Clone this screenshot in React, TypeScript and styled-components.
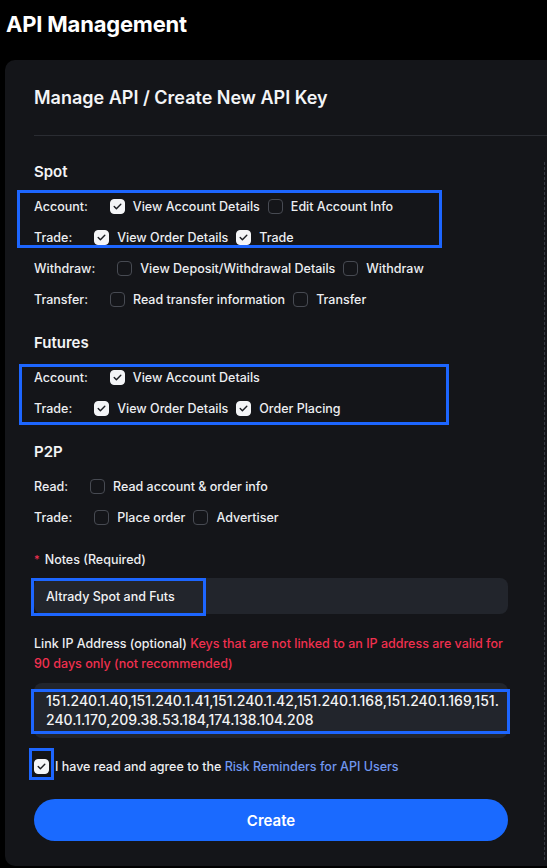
import React from "react";
import styled, { createGlobalStyle } from "styled-components";

const GlobalStyle = createGlobalStyle`
  html, body { margin: 0; padding: 0; background: #000; }
  body {
    font-family: Inter, "Noto Sans", "Liberation Sans", Arial, sans-serif;
    color: #eaecef;
  }
  * { box-sizing: border-box; }
`;

const Page = styled.div`
  width: 547px;
  height: 868px;
  overflow: hidden;
  background: #000;
  padding-top: 10px;
`;

const PageTitle = styled.h1`
  margin: 0 0 22px 6px;
  font-size: 22px;
  line-height: 28px;
  font-weight: 700;
  color: #ffffff;
  letter-spacing: -0.2px;
`;

const Card = styled.section`
  margin-left: 5px;
  width: 660px;
  height: 806px;
  background: #141519;
  border-radius: 10px;
  padding-top: 26px;
  display: flex;
  flex-direction: column;
`;

const CardTitle = styled.h2`
  margin: 0 0 0 29px;
  font-size: 18px;
  line-height: 24px;
  font-weight: 600;
  color: #f3f4f6;
`;

const Divider = styled.hr`
  margin: 25px 0 0 29px;
  border: 0;
  height: 1px;
  background: #2a2c32;
`;

const CardBody = styled.div`
  flex: 1;
  display: flex;
  padding-top: 26px;
`;

const FormColumn = styled.div`
  width: 474px;
  margin-left: 29px;
  display: flex;
  flex-direction: column;
`;

const SideColumn = styled.aside`
  flex: 1;
  margin-left: 36px;
  margin-bottom: 4px;
  background-image: repeating-linear-gradient(
    to bottom,
    #363941 0 3px,
    transparent 3px 5px
  );
  background-size: 1px 100%;
  background-repeat: no-repeat;
`;

const SectionTitle = styled.h3`
  margin: 18px 0 0;
  font-size: 15px;
  line-height: 20px;
  font-weight: 600;
  color: #f3f4f6;
  &:first-child {
    margin-top: 0;
  }
`;

const RowGroup = styled.div`
  position: relative;
  margin-top: 9px;
`;

const Highlight = styled.div<{ $l: number; $t: number; $w: number; $h: number }>`
  position: absolute;
  left: ${(p) => p.$l}px;
  top: ${(p) => p.$t}px;
  width: ${(p) => p.$w}px;
  height: ${(p) => p.$h}px;
  border: 3px solid #1d66ff;
  pointer-events: none;
`;

const PermRow = styled.div`
  display: flex;
  align-items: center;
  height: 31px;
  font-size: 12.5px;
  line-height: 20px;
  font-weight: 500;
  color: #eceef1;
  white-space: nowrap;
`;

const RowLabel = styled.span`
  margin-right: 22px;
`;

const Option = styled.label`
  display: inline-flex;
  align-items: center;
  gap: 8px;
  margin-right: 8px;
`;

const Box = styled.span<{ $checked?: boolean }>`
  position: relative;
  flex: none;
  width: 15px;
  height: 15px;
  border-radius: 4px;
  display: inline-flex;
  align-items: center;
  justify-content: center;
  background: ${(p) => (p.$checked ? "#f4f5f7" : "transparent")};
  border: 1px solid ${(p) => (p.$checked ? "#f4f5f7" : "#474a52")};
`;

const Check = ({ on }: { on?: boolean }) => (
  <Box $checked={on}>
    {on && (
      <svg width="11" height="11" viewBox="0 0 11 11" fill="none">
        <path
          d="M2.2 5.6 L4.4 7.8 L8.8 3.2"
          stroke="#1b1d22"
          strokeWidth="1.4"
          strokeLinecap="round"
          strokeLinejoin="round"
        />
      </svg>
    )}
  </Box>
);

const FieldLabel = styled.div<{ $gap: number }>`
  margin-top: ${(p) => p.$gap}px;
  font-size: 12.5px;
  line-height: 20px;
  font-weight: 500;
  color: #eceef1;
`;

const Star = styled.span`
  color: #f23051;
  font-size: 11px;
  margin-right: 5px;
  vertical-align: 1px;
`;

const Warn = styled.span`
  color: #f0304f;
`;

const NotesInput = styled.div`
  position: relative;
  margin-top: 8px;
  height: 36px;
  background: #22252c;
  border-radius: 8px;
  padding: 0 12px;
  display: flex;
  align-items: center;
  font-size: 12.5px;
  font-weight: 500;
  color: #f2f3f5;
`;

const IpArea = styled.div`
  position: relative;
  margin-top: 9px;
  background: #22252c;
  border-radius: 8px;
  padding: 8px 8px 9px 12px;
  font-size: 14px;
  line-height: 19px;
  font-weight: 500;
  color: #f2f3f5;
  word-break: break-all;
`;

const AgreeRow = styled.div`
  position: relative;
  margin-top: 18px;
  display: flex;
  align-items: center;
  gap: 6px;
  height: 20px;
  font-size: 12.5px;
  font-weight: 500;
  color: #eceef1;
  white-space: nowrap;
`;

const AgreeBox = styled.span`
  position: relative;
  display: inline-flex;
`;

const RiskLink = styled.a`
  color: #7097ef;
  text-decoration: none;
`;

const CreateButton = styled.button`
  margin-top: 23px;
  height: 42px;
  width: 100%;
  border: 0;
  border-radius: 21px;
  background: #1a6aff;
  color: #ffffff;
  font-family: inherit;
  font-size: 15px;
  font-weight: 600;
`;

type Opt = { text: string; on?: boolean };
const Row = ({ label, opts }: { label: string; opts: Opt[] }) => (
  <PermRow>
    <RowLabel>{label}</RowLabel>
    {opts.map((o) => (
      <Option key={o.text}>
        <Check on={o.on} />
        {o.text}
      </Option>
    ))}
  </PermRow>
);

export default function App() {
  return (
    <Page>
      <GlobalStyle />
      <PageTitle>API Management</PageTitle>
      <Card>
        <CardTitle>Manage API / Create New API Key</CardTitle>
        <Divider />
        <CardBody>
          <FormColumn>
            <SectionTitle>Spot</SectionTitle>
            <RowGroup>
              <Row
                label="Account:"
                opts={[
                  { text: "View Account Details", on: true },
                  { text: "Edit Account Info" },
                ]}
              />
              <Row
                label="Trade:"
                opts={[
                  { text: "View Order Details", on: true },
                  { text: "Trade", on: true },
                ]}
              />
              <Highlight $l={-17} $t={-1} $w={425} $h={58} />
              <Row
                label="Withdraw:"
                opts={[
                  { text: "View Deposit/Withdrawal Details" },
                  { text: "Withdraw" },
                ]}
              />
              <Row
                label="Transfer:"
                opts={[{ text: "Read transfer information" }, { text: "Transfer" }]}
              />
            </RowGroup>

            <SectionTitle>Futures</SectionTitle>
            <RowGroup>
              <Row label="Account:" opts={[{ text: "View Account Details", on: true }]} />
              <Row
                label="Trade:"
                opts={[
                  { text: "View Order Details", on: true },
                  { text: "Order Placing", on: true },
                ]}
              />
              <Highlight $l={-15} $t={2} $w={430} $h={61} />
            </RowGroup>

            <SectionTitle>P2P</SectionTitle>
            <RowGroup>
              <Row label="Read:" opts={[{ text: "Read account & order info" }]} />
              <Row
                label="Trade:"
                opts={[{ text: "Place order" }, { text: "Advertiser" }]}
              />
            </RowGroup>

            <FieldLabel $gap={16}>
              <Star>*</Star>Notes (Required)
            </FieldLabel>
            <NotesInput>
              Altrady Spot and Futs
              <Highlight $l={-3} $t={0} $w={175} $h={38} />
            </NotesInput>

            <FieldLabel $gap={20}>
              Link IP Address (optional){" "}
              <Warn>
                Keys that are not linked to an IP address are valid for 90 days only (not
                recommended)
              </Warn>
            </FieldLabel>
            <IpArea>
              151.240.1.40,151.240.1.41,151.240.1.42,151.240.1.168,151.240.1.169,151.240.1.170,209.38.53.184,174.138.104.208
              <Highlight $l={-3} $t={6} $w={479} $h={45} />
            </IpArea>

            <AgreeRow>
              <AgreeBox>
                <Check on />
                <Highlight $l={-5} $t={-11} $w={25} $h={32} />
              </AgreeBox>
              <span>
                I have read and agree to the{" "}
                <RiskLink href="#">Risk Reminders for API Users</RiskLink>
              </span>
            </AgreeRow>

            <CreateButton type="button">Create</CreateButton>
          </FormColumn>
          <SideColumn />
        </CardBody>
      </Card>
    </Page>
  );
}
